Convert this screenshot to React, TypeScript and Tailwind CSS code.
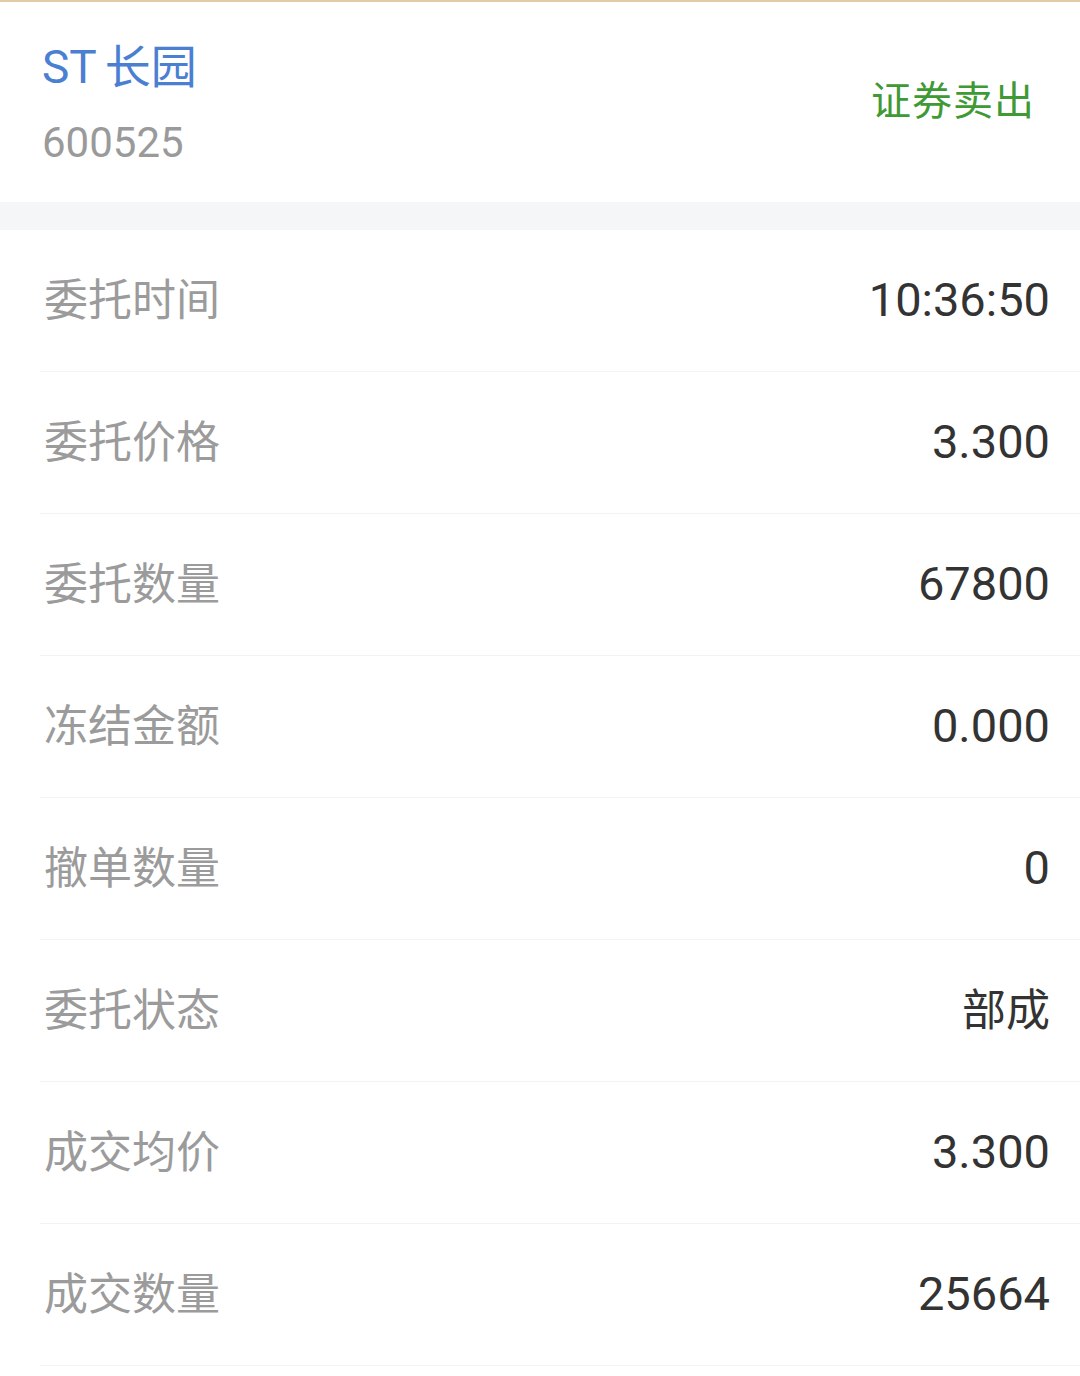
const rows: [string, string][] = [
  ["委托时间", "10:36:50"],
  ["委托价格", "3.300"],
  ["委托数量", "67800"],
  ["冻结金额", "0.000"],
  ["撤单数量", "0"],
  ["委托状态", "部成"],
  ["成交均价", "3.300"],
  ["成交数量", "25664"],
];

export default function App() {
  return (
    <div
      className="w-[1080px] h-[1376px] bg-white overflow-hidden"
      style={{ fontFamily: 'Roboto, "Noto Sans CJK SC", sans-serif' }}
    >
      <div className="h-[2px] bg-[#e3cba8]" />
      <div className="h-[200px] flex items-center justify-between pl-[42px] pr-[45px]">
        <div className="flex flex-col mt-[6px]">
          <div className="text-[46px] leading-[56px] text-[#4a7fd2] -mt-[4px]">
            ST<span className="ml-[8px]">长园</span>
          </div>
          <div className="text-[42px] leading-[48px] mt-[24px] text-[#9a9a9a]">600525</div>
        </div>
        <div className="text-[40px] text-[#3f9a35] tracking-[1px]">证券卖出</div>
      </div>
      <div className="h-[28px] bg-[#f5f6f8]" />
      <div>
        {rows.map(([label, value]) => (
          <div key={label} className="pl-[40px]">
            <div className="h-[141px] flex items-center justify-between pl-[4px] pr-[30px]">
              <span className="text-[44px] text-[#9b9b9b]">{label}</span>
              <span
                className={
                  /^[\d.:]+$/.test(value)
                    ? "text-[47px] text-[#333333]"
                    : "text-[44px] text-[#333333]"
                }
              >
                {value}
              </span>
            </div>
            <div className="h-[1px] bg-[#f3f3f3]" />
          </div>
        ))}
      </div>
    </div>
  );
}
